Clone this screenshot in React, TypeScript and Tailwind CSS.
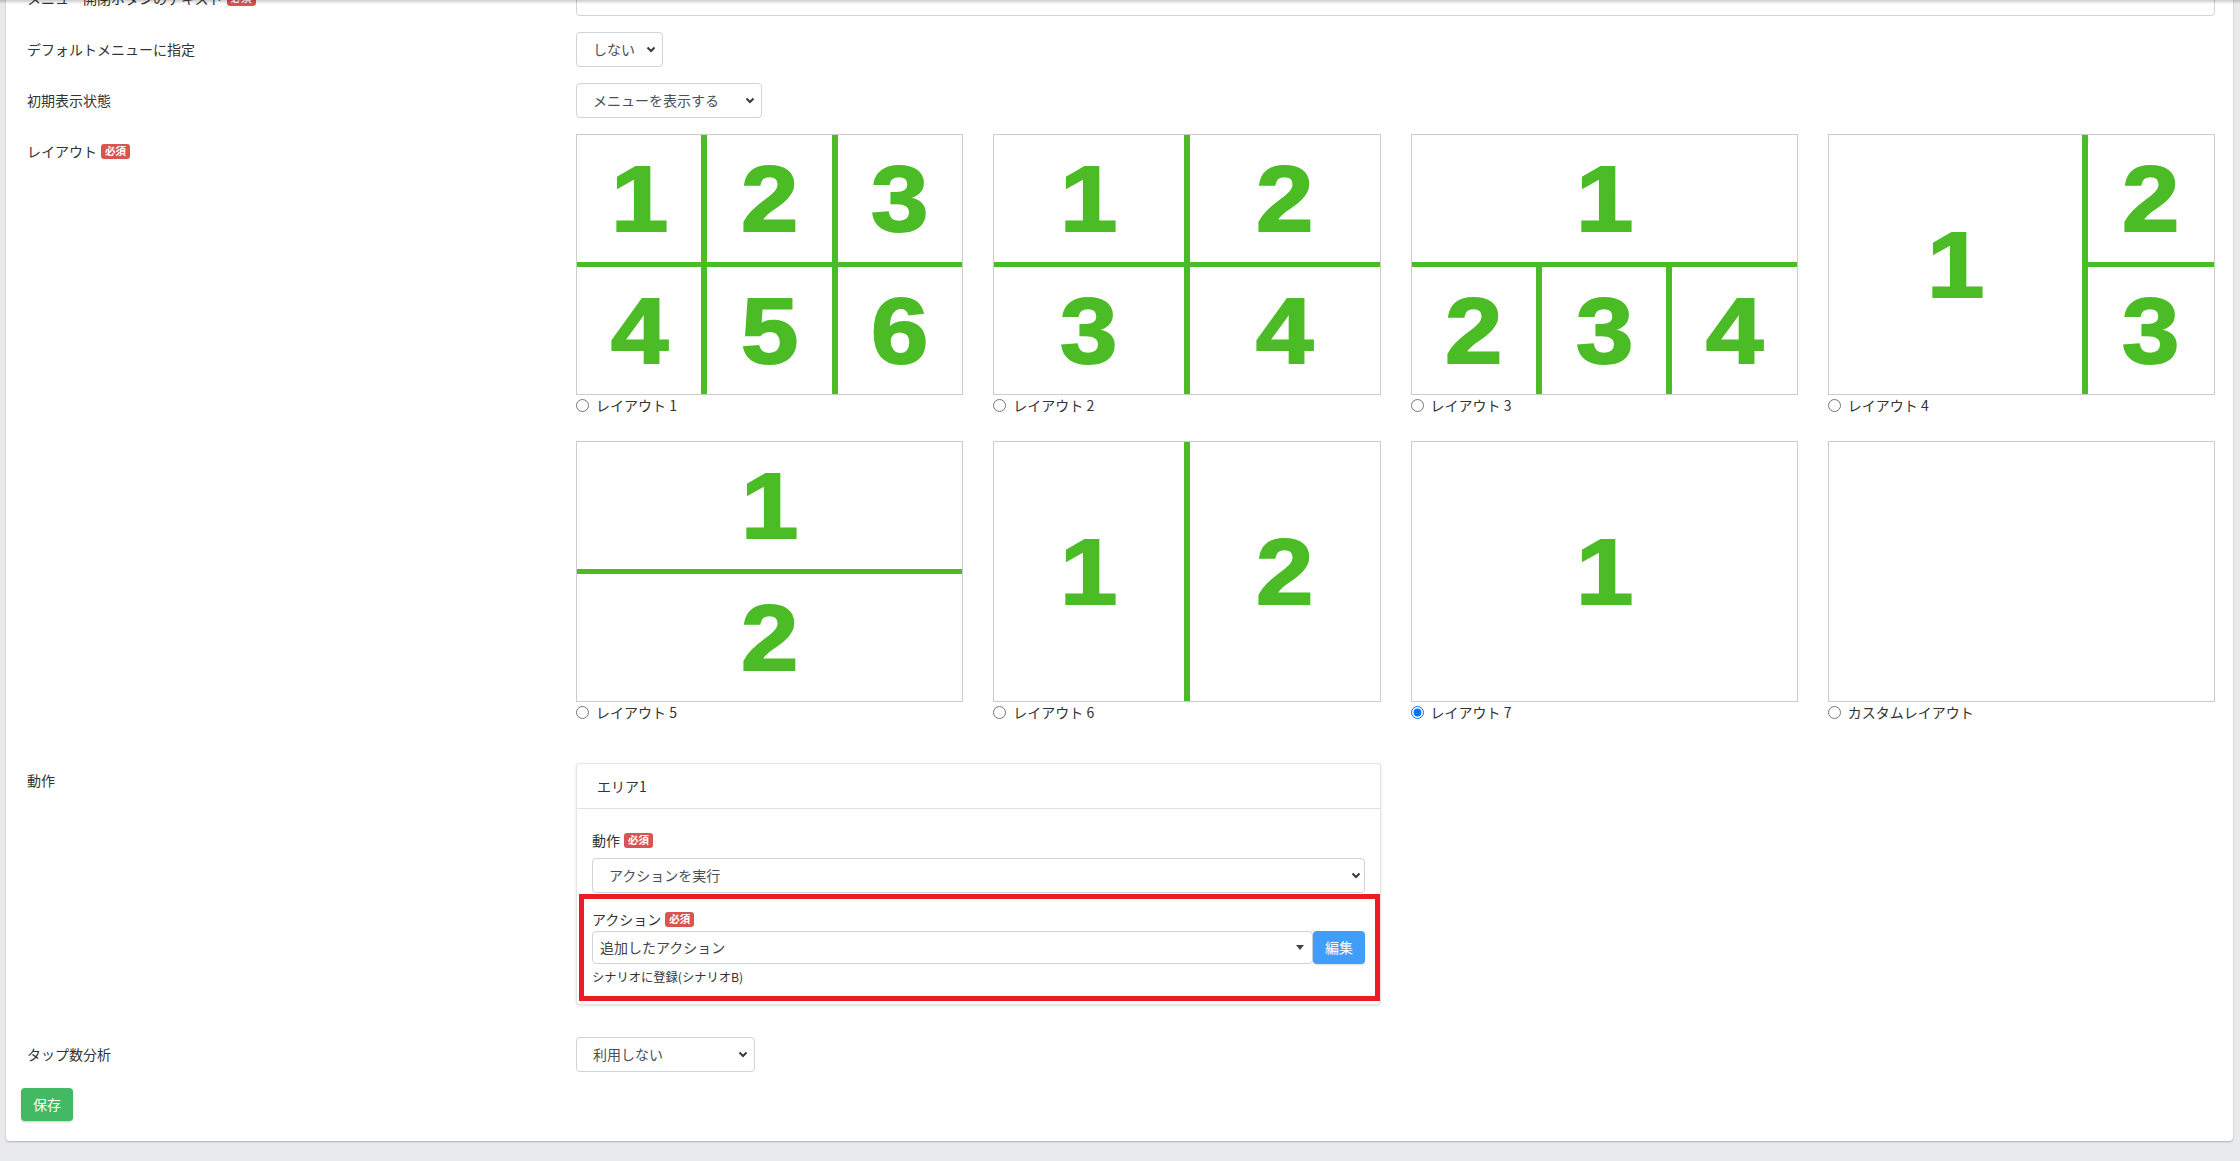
import React from 'react';

function Badge() {
  return (
    <span className="ml-[4px] inline-flex h-[15px] items-center rounded-[3px] bg-[#d9534f] px-[4px] text-[10.5px] font-bold leading-none text-white">
      必須
    </span>
  );
}

function Chevron() {
  return (
    <svg width="10" height="7" viewBox="0 0 10 7" className="shrink-0">
      <path d="M1.5 1.5l3.5 3.5 3.5-3.5" fill="none" stroke="#343a40" strokeWidth="2" />
    </svg>
  );
}

function SelectBox({ value, w }: { value: string; w: string }) {
  return (
    <div className={`${w} flex h-[35px] items-center justify-between rounded-[4px] border border-[#ced4da] bg-white pl-[16px] pr-[6px] text-[14px] text-[#495057]`}>
      <span>{value}</span>
      <Chevron />
    </div>
  );
}

function Num({ n }: { n: string }) {
  return (
    <span className="inline-block scale-x-[1.12] font-['Liberation_Sans',Arial,sans-serif] text-[92px] font-bold leading-none text-[#4cbc26] [-webkit-text-stroke:2px_#4cbc26]">
      {n}
    </span>
  );
}

function Cell({ n, grow = 'flex-1' }: { n?: string; grow?: string }) {
  return <div className={`${grow} flex min-h-0 min-w-0 items-center justify-center`}>{n && <Num n={n} />}</div>;
}

const VLine = () => <div className="w-[6px] shrink-0 bg-[#4cbc26]" />;
const HLine = () => <div className="h-[5px] shrink-0 bg-[#4cbc26]" />;

const layouts: { label: string; checked?: boolean; body: React.ReactNode }[] = [
  {
    label: 'レイアウト 1',
    body: (
      <div className="flex h-full flex-col">
        <div className="flex min-h-0 flex-1">
          <Cell n="1" /><VLine /><Cell n="2" /><VLine /><Cell n="3" />
        </div>
        <HLine />
        <div className="flex min-h-0 flex-1">
          <Cell n="4" /><VLine /><Cell n="5" /><VLine /><Cell n="6" />
        </div>
      </div>
    ),
  },
  {
    label: 'レイアウト 2',
    body: (
      <div className="flex h-full flex-col">
        <div className="flex min-h-0 flex-1">
          <Cell n="1" /><VLine /><Cell n="2" />
        </div>
        <HLine />
        <div className="flex min-h-0 flex-1">
          <Cell n="3" /><VLine /><Cell n="4" />
        </div>
      </div>
    ),
  },
  {
    label: 'レイアウト 3',
    body: (
      <div className="flex h-full flex-col">
        <div className="flex min-h-0 flex-1">
          <Cell n="1" />
        </div>
        <HLine />
        <div className="flex min-h-0 flex-1">
          <Cell n="2" /><VLine /><Cell n="3" /><VLine /><Cell n="4" />
        </div>
      </div>
    ),
  },
  {
    label: 'レイアウト 4',
    body: (
      <div className="flex h-full">
        <Cell n="1" grow="flex-[2]" />
        <VLine />
        <div className="flex min-w-0 flex-1 flex-col">
          <Cell n="2" />
          <HLine />
          <Cell n="3" />
        </div>
      </div>
    ),
  },
  {
    label: 'レイアウト 5',
    body: (
      <div className="flex h-full flex-col">
        <Cell n="1" />
        <HLine />
        <Cell n="2" />
      </div>
    ),
  },
  {
    label: 'レイアウト 6',
    body: (
      <div className="flex h-full">
        <Cell n="1" />
        <VLine />
        <Cell n="2" />
      </div>
    ),
  },
  {
    label: 'レイアウト 7',
    checked: true,
    body: (
      <div className="flex h-full">
        <Cell n="1" />
      </div>
    ),
  },
  { label: 'カスタムレイアウト', body: null },
];

function Row({ label, children, mb = 'mb-[16px]' }: { label: React.ReactNode; children: React.ReactNode; mb?: string }) {
  return (
    <div className={`flex ${mb}`}>
      <div className="flex h-[35px] w-[555px] shrink-0 items-center pl-[6px] leading-[21px]">{label}</div>
      <div className="min-w-0 flex-1 pr-[3px]">{children}</div>
    </div>
  );
}

export default function App() {
  return (
    <div className="relative min-h-screen overflow-hidden bg-[#e9eaec] pb-[20px] pl-[6px] pr-[7px] font-['Noto_Sans_CJK_JP','Noto_Sans',sans-serif] text-[14px] text-[#333]">
      <div className="pointer-events-none absolute inset-x-0 top-0 z-10 h-[4px] bg-gradient-to-b from-black/20 to-transparent" />

      <div className="-mt-[35px] rounded-[4px] bg-white px-[15px] pb-[20px] pt-[16px] shadow-[0_1px_2px_rgba(0,0,0,0.25)]">
        <Row label={<>メニュー開閉ボタンのテキスト<Badge /></>}>
          <div className="h-[35px] rounded-[4px] border border-[#ced4da] bg-white" />
        </Row>

        <Row label="デフォルトメニューに指定">
          <SelectBox value="しない" w="w-[87px]" />
        </Row>

        <Row label="初期表示状態">
          <SelectBox value="メニューを表示する" w="w-[186px]" />
        </Row>

        <Row label={<>レイアウト<Badge /></>} mb="mb-[15px]">
          <div className="grid grid-cols-4 gap-x-[30px]">
            {layouts.map((l) => (
              <div key={l.label} className="mb-[25px]">
                <div className="h-[261px] overflow-hidden border border-[#cccccc] bg-white">{l.body}</div>
                <label className="flex h-[21px] items-center gap-[7px] text-[14px] text-[#333]">
                  <input type="radio" name="layout" defaultChecked={l.checked} className="m-0 h-[13px] w-[13px]" />
                  {l.label}
                </label>
              </div>
            ))}
          </div>
        </Row>

        <Row label="動作" mb="mb-[32px]">
          <div className="relative w-[805px] rounded-[4px] border border-black/10 bg-white shadow-[0_1px_3px_rgba(0,0,0,0.12)]">
            <div className="flex h-[45px] items-center border-b border-[#dee2e6] px-[20px]">エリア1</div>
            <div className="px-[15px] pb-[18px] pt-[21px]">
              <div className="flex h-[21px] items-center">動作<Badge /></div>
              <div className="mt-[7px] flex h-[35px] items-center justify-between rounded-[4px] border border-[#ced4da] bg-white pl-[16px] pr-[3px] text-[#495057]">
                <span>アクションを実行</span>
                <Chevron />
              </div>
              <div className="mt-[16px] flex h-[21px] items-center">アクション<Badge /></div>
              <div className="mt-[1px] flex h-[33px]">
                <div className="flex min-w-0 flex-1 items-center justify-between rounded-[4px] border border-[#ced4da] bg-white pl-[7px] pr-[8px] text-[#444]">
                  <span>追加したアクション</span>
                  <svg width="8" height="5" viewBox="0 0 8 5" className="shrink-0">
                    <path d="M0 0h8L4 5z" fill="#444" />
                  </svg>
                </div>
                <button className="flex h-[33px] w-[52px] items-center justify-center rounded-[4px] bg-[#419ef8] text-white shadow-[0_1px_2px_rgba(0,0,0,0.15)]">
                  編集
                </button>
              </div>
              <div className="mt-[4px] text-[12.25px] leading-[18px] text-[#333]">シナリオに登録(シナリオB)</div>
            </div>
            <div className="pointer-events-none absolute left-[2px] top-[130px] h-[107px] w-[801px] border-[5px] border-[#ed1c24]" />
          </div>
        </Row>

        <Row label="タップ数分析">
          <SelectBox value="利用しない" w="w-[179px]" />
        </Row>

        <button className="flex h-[33px] w-[52px] items-center justify-center rounded-[4px] bg-[#42b962] text-white shadow-[0_1px_2px_rgba(0,0,0,0.2)]">
          保存
        </button>
      </div>
    </div>
  );
}
